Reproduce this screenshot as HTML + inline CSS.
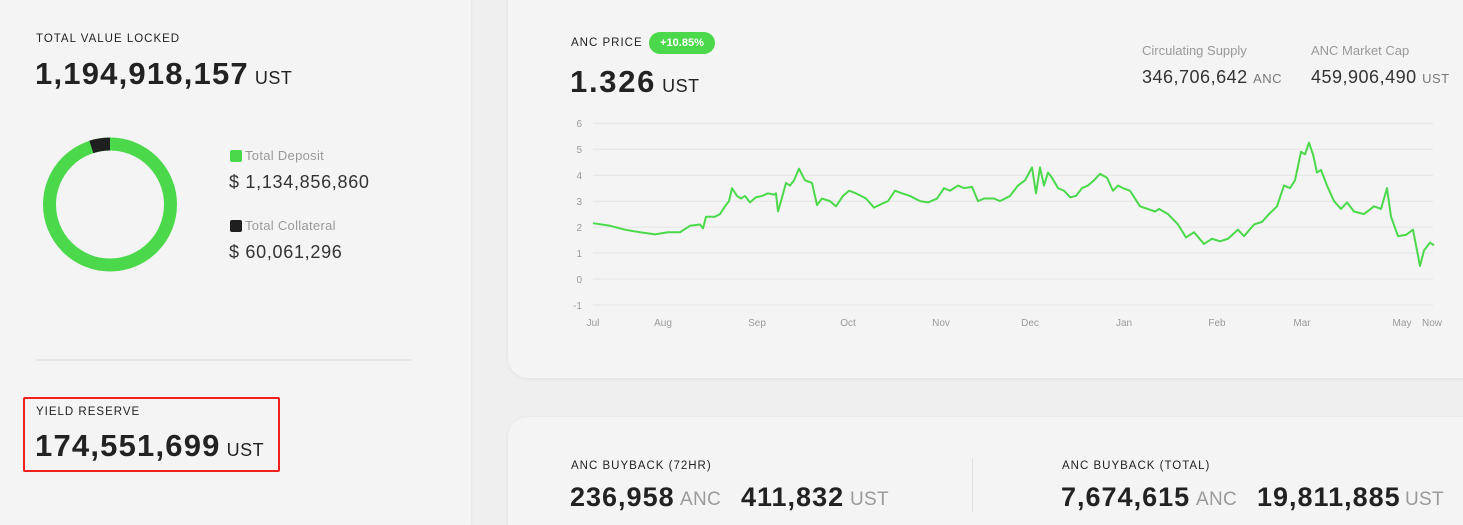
<!DOCTYPE html>
<html style="height:525px;overflow:hidden"><head><meta charset="utf-8"><style>
*{margin:0;padding:0;box-sizing:border-box}
body{width:1463px;height:525px;overflow:hidden;background:#efefef;font-family:"Liberation Sans",sans-serif;color:#1f1f1f;position:relative}
.a{position:absolute;white-space:nowrap}
.left{position:absolute;left:0;top:0;width:471px;height:525px;background:#f4f4f4;box-shadow:1px 0 2px rgba(0,0,0,.04)}
.card{position:absolute;background:#f4f4f4;border-radius:20px;box-shadow:0 1px 4px rgba(0,0,0,.06)}
.lbl{font-size:11.5px;letter-spacing:1px;color:#222}
.big{font-size:31px;font-weight:bold;letter-spacing:1.2px;color:#222}
.big small{font-size:18px;font-weight:normal;margin-left:6px;letter-spacing:.5px}
.g{color:#9a9a9a}
.bn{font-size:27px;font-weight:bold;letter-spacing:1px;color:#222}
.bu{font-size:19px;color:#9a9a9a;letter-spacing:.3px}
</style></head><body>
<div class="left"></div>
<div class="a lbl" style="left:36px;top:33px">TOTAL VALUE LOCKED</div>
<div class="a big" style="left:35px;top:56px">1,194,918,157<small>UST</small></div>
<svg class="a" style="left:0;top:0" width="300" height="300">
<circle cx="110" cy="204.5" r="60.5" fill="none" stroke="#4bd94b" stroke-width="13"/>
<circle cx="110" cy="204.5" r="60.5" fill="none" stroke="#1f1f1f" stroke-width="13" stroke-dasharray="19 400" transform="rotate(-108 110 204.5)"/>
</svg>
<div class="a" style="left:230px;top:150px;width:12px;height:12px;border-radius:2px;background:#4bd94b"></div>
<div class="a" style="left:245px;top:148px;font-size:13px;letter-spacing:.3px;color:#999">Total Deposit</div>
<div class="a" style="left:229px;top:172px;font-size:18px;letter-spacing:.7px;color:#333">$ 1,134,856,860</div>
<div class="a" style="left:230px;top:220px;width:12px;height:12px;border-radius:2px;background:#1f1f1f"></div>
<div class="a" style="left:245px;top:218px;font-size:13px;letter-spacing:.3px;color:#999">Total Collateral</div>
<div class="a" style="left:229px;top:242px;font-size:18px;letter-spacing:.7px;color:#333">$ 60,061,296</div>
<div class="a" style="left:36px;top:359px;width:375px;height:2px;background:#e6e6e6"></div>
<div class="a" style="left:23px;top:397px;width:257px;height:75px;border:2px solid #f0201c;border-radius:2px"></div>
<div class="a lbl" style="left:36px;top:406px">YIELD RESERVE</div>
<div class="a big" style="left:35px;top:428px">174,551,699<small>UST</small></div>

<div class="card" style="left:508px;top:-30px;width:990px;height:408px"></div>
<div class="card" style="left:508px;top:417px;width:990px;height:130px"></div>

<div class="a lbl" style="left:571px;top:37px">ANC PRICE</div>
<div class="a" style="left:649px;top:32px;width:66px;height:22px;border-radius:11px;background:#4bd94b;color:#fff;font-size:11px;font-weight:bold;text-align:center;line-height:22px">+10.85%</div>
<div class="a big" style="left:570px;top:64px;letter-spacing:1.7px">1.326<small>UST</small></div>
<div class="a" style="left:1142px;top:43px;font-size:13px;color:#999">Circulating Supply</div>
<div class="a" style="left:1142px;top:67px;font-size:18px;letter-spacing:.5px;color:#333">346,706,642 <span style="font-size:13px;color:#777">ANC</span></div>
<div class="a" style="left:1311px;top:43px;font-size:13px;color:#999">ANC Market Cap</div>
<div class="a" style="left:1311px;top:67px;font-size:18px;letter-spacing:.5px;color:#333">459,906,490 <span style="font-size:13px;color:#777">UST</span></div>

<svg class="a" style="left:0;top:0" width="1463" height="340" font-family="Liberation Sans" font-size="10" fill="#999">
<g stroke="#e3e3e3" stroke-width="1">
<line x1="593" x2="1433" y1="123.3" y2="123.3"/><line x1="593" x2="1433" y1="149.3" y2="149.3"/><line x1="593" x2="1433" y1="175.2" y2="175.2"/><line x1="593" x2="1433" y1="201.2" y2="201.2"/><line x1="593" x2="1433" y1="227.1" y2="227.1"/><line x1="593" x2="1433" y1="253" y2="253"/><line x1="593" x2="1433" y1="279" y2="279"/><line x1="593" x2="1433" y1="305" y2="305"/>
</g>
<g text-anchor="end"><text x="582" y="127">6</text><text x="582" y="153">5</text><text x="582" y="179">4</text><text x="582" y="205">3</text><text x="582" y="231">2</text><text x="582" y="257">1</text><text x="582" y="283">0</text><text x="582" y="309">-1</text></g>
<g text-anchor="middle"><text x="593" y="326">Jul</text><text x="663" y="326">Aug</text><text x="757" y="326">Sep</text><text x="848" y="326">Oct</text><text x="941" y="326">Nov</text><text x="1030" y="326">Dec</text><text x="1124" y="326">Jan</text><text x="1217" y="326">Feb</text><text x="1302" y="326">Mar</text><text x="1402" y="326">May</text><text x="1432" y="326">Now</text></g>
<g transform="translate(0,279) scale(1,-25.96)">
<polyline fill="none" stroke="#4bd94b" stroke-width="2" vector-effect="non-scaling-stroke" stroke-linejoin="round" points="593,2.15 610,2.05 625,1.9 640,1.8 655,1.72 668,1.8 680,1.8 690,2.05 700,2.1 703,1.95 706,2.4 715,2.4 720,2.5 725,2.8 729,3.0 732,3.5 737,3.2 741,3.1 745,3.2 750,2.95 756,3.15 762,3.2 768,3.3 774,3.25 776,3.3 778,2.6 781,3.0 786,3.7 790,3.6 794,3.8 799,4.25 805,3.8 812,3.7 817,2.85 822,3.1 830,3.0 836,2.8 843,3.2 849,3.4 856,3.3 866,3.1 874,2.75 882,2.9 888,3.0 895,3.4 902,3.3 910,3.2 920,3.0 928,2.95 937,3.1 944,3.5 950,3.4 958,3.6 964,3.5 972,3.55 978,3.0 984,3.1 994,3.1 1000,3.0 1010,3.2 1018,3.6 1025,3.8 1032,4.3 1036,3.3 1040,4.3 1044,3.6 1048,4.1 1052,3.9 1058,3.5 1064,3.4 1070,3.15 1076,3.2 1082,3.5 1088,3.6 1094,3.8 1100,4.05 1107,3.9 1113,3.4 1118,3.6 1123,3.5 1130,3.4 1140,2.8 1155,2.6 1159,2.7 1168,2.5 1178,2.1 1186,1.6 1194,1.8 1204,1.35 1212,1.55 1220,1.45 1228,1.55 1238,1.9 1244,1.65 1254,2.1 1262,2.2 1269,2.5 1277,2.8 1284,3.6 1290,3.5 1295,3.8 1301,4.9 1305,4.8 1309,5.25 1313,4.8 1317,4.1 1321,4.2 1327,3.6 1334,3.0 1341,2.7 1347,2.95 1354,2.6 1364,2.5 1374,2.8 1381,2.7 1387,3.5 1391,2.4 1398,1.65 1406,1.7 1413,1.9 1420,0.5 1424,1.1 1430,1.4 1434,1.3"/>
</g>
</svg>

<div class="a lbl" style="left:571px;top:460px">ANC BUYBACK (72HR)</div>
<div class="a bn" style="left:570px;top:482px">236,958</div>
<div class="a bu" style="left:680px;top:489px">ANC</div>
<div class="a bn" style="left:741px;top:482px">411,832</div>
<div class="a bu" style="left:850px;top:489px">UST</div>
<div class="a" style="left:972px;top:458px;width:1px;height:54px;background:#e0e0e0"></div>
<div class="a lbl" style="left:1062px;top:460px">ANC BUYBACK (TOTAL)</div>
<div class="a bn" style="left:1061px;top:482px">7,674,615</div>
<div class="a bu" style="left:1196px;top:489px">ANC</div>
<div class="a bn" style="left:1257px;top:482px">19,811,885</div>
<div class="a bu" style="left:1405px;top:489px">UST</div>
</body></html>
